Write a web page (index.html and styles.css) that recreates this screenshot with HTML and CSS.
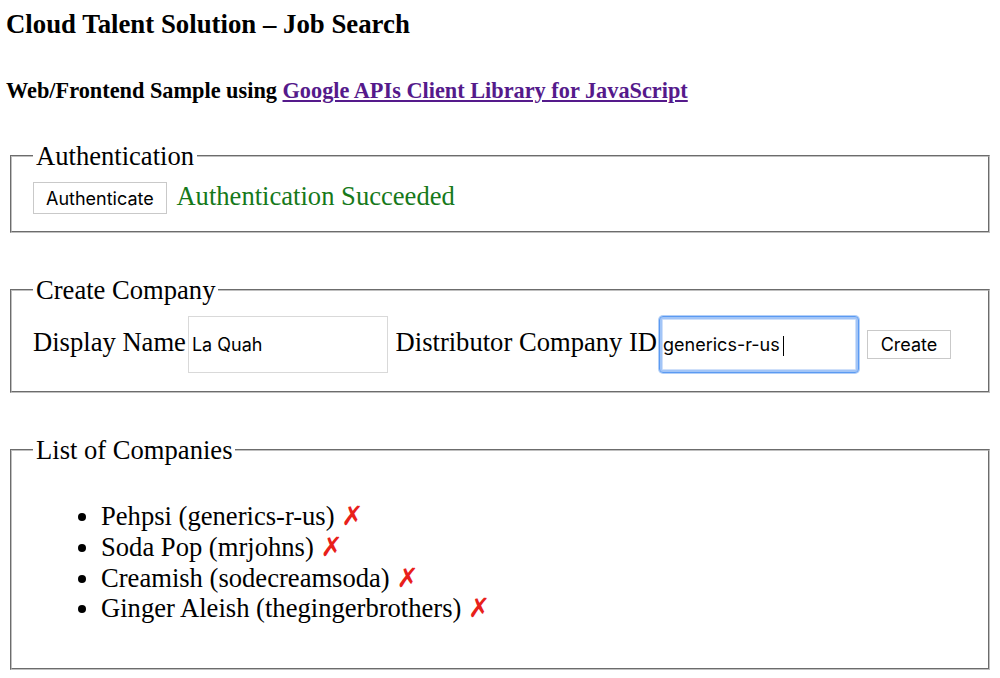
FILE: index.html
```html
<!DOCTYPE html>
<html lang="en">
<head>
<meta charset="utf-8">
<title>Cloud Talent Solution – Job Search</title>
<link rel="stylesheet" href="styles.css">
</head>
<body>
<h1 class="title">Cloud Talent Solution – Job Search</h1>
<h2 class="subtitle">Web/Frontend Sample using <a class="link" href="#">Google APIs Client Library for JavaScript</a></h2>

<fieldset class="panel">
<legend class="panel-legend">Authentication</legend>
<button class="btn btn-auth" type="button">Authenticate</button> <span class="ok">Authentication Succeeded</span>
</fieldset>

<fieldset class="panel panel-form">
<legend class="panel-legend">Create Company</legend>
<label class="lbl">Display Name<input class="field" type="text" value="La Quah"></label> <label class="lbl">Distributor Company ID<span class="field-wrap"><input class="field field-focus" type="text" value="generics-r-us"><span class="caret"></span></span></label> <button class="btn btn-create" type="button">Create</button>
</fieldset>

<fieldset class="panel panel-list">
<legend class="panel-legend">List of Companies</legend>
<ul class="companies">
<li class="company">Pehpsi (generics-r-us) <span class="del">✗</span></li>
<li class="company">Soda Pop (mrjohns) <span class="del">✗</span></li>
<li class="company">Creamish (sodecreamsoda) <span class="del">✗</span></li>
<li class="company">Ginger Aleish (thegingerbrothers) <span class="del">✗</span></li>
</ul>
</fieldset>
</body>
</html>
```

FILE: styles.css
```css
html, body {
  background: #fff;
}
body {
  margin: 0;
  padding: 9px 6px 0 6px;
  font-family: "Liberation Serif", "Times New Roman", serif;
  color: #000;
}
.title {
  margin: 0;
  font-size: 26.8px;
  font-weight: bold;
  line-height: 30.6px;
}
.subtitle {
  margin: 38px 0 38px 0;
  font-size: 22.3px;
  font-weight: bold;
  line-height: 25.5px;
}
.link {
  color: #551a8b;
}
.panel {
  margin: 0 4px 42px 4px;
  padding: 9.3px 20px 16.6px 21px;
  border: 2px groove #c0c0c0;
  font-size: 26.6px;
  line-height: 30.6px;
  min-width: 0;
}
.panel-form {
  padding-top: 10.3px;
  padding-bottom: 17.6px;
}
.panel-list {
  margin-bottom: 0;
}
.panel-legend {
  padding: 0 3px;
  margin-left: 0;
}
.btn {
  font-family: Inter, "Liberation Sans", sans-serif;
  font-size: 18px;
  color: #000;
  background: #fff;
  border: 1px solid #c9c9c9;
  border-radius: 0;
  margin: 0;
  vertical-align: baseline;
  box-sizing: border-box;
}
.btn-auth {
  height: 32px;
  padding: 0 12px;
}
.ok {
  color: #16791a;
  margin-left: 3px;
}
.btn-create {
  height: 29px;
  padding: 0 13px;
  margin-left: 1px;
}
.lbl {
  white-space: nowrap;
}
.lbl + .lbl {
  margin-left: 1px;
}
.field {
  box-sizing: border-box;
  width: 200px;
  height: 57px;
  margin: 0 0 0 2px;
  padding: 0 3px;
  border: 1px solid #d9d9d9;
  font-family: Inter, "Liberation Sans", sans-serif;
  font-size: 18px;
  color: #000;
  background: #fff;
  vertical-align: baseline;
}
.field-wrap {
  position: relative;
  display: inline-block;
}
.field-focus {
  border: 1px solid #5b9af2;
  border-radius: 4px;
  outline: none;
  box-shadow: 0 0 0 1px #b3d0f8, inset 0 0 0 2px #a2c5f7, inset 0 0 0 3px #cfe0fa;
}
.caret {
  position: absolute;
  left: 126px;
  top: 20px;
  width: 1px;
  height: 20px;
  background: #000;
}
.companies {
  margin: 27px 0 28px 0;
  padding-left: 68px;
}
.company {
  line-height: 30.6px;
}
.del {
  color: #e8201a;
  font-family: "DejaVu Sans", sans-serif;
}
```
